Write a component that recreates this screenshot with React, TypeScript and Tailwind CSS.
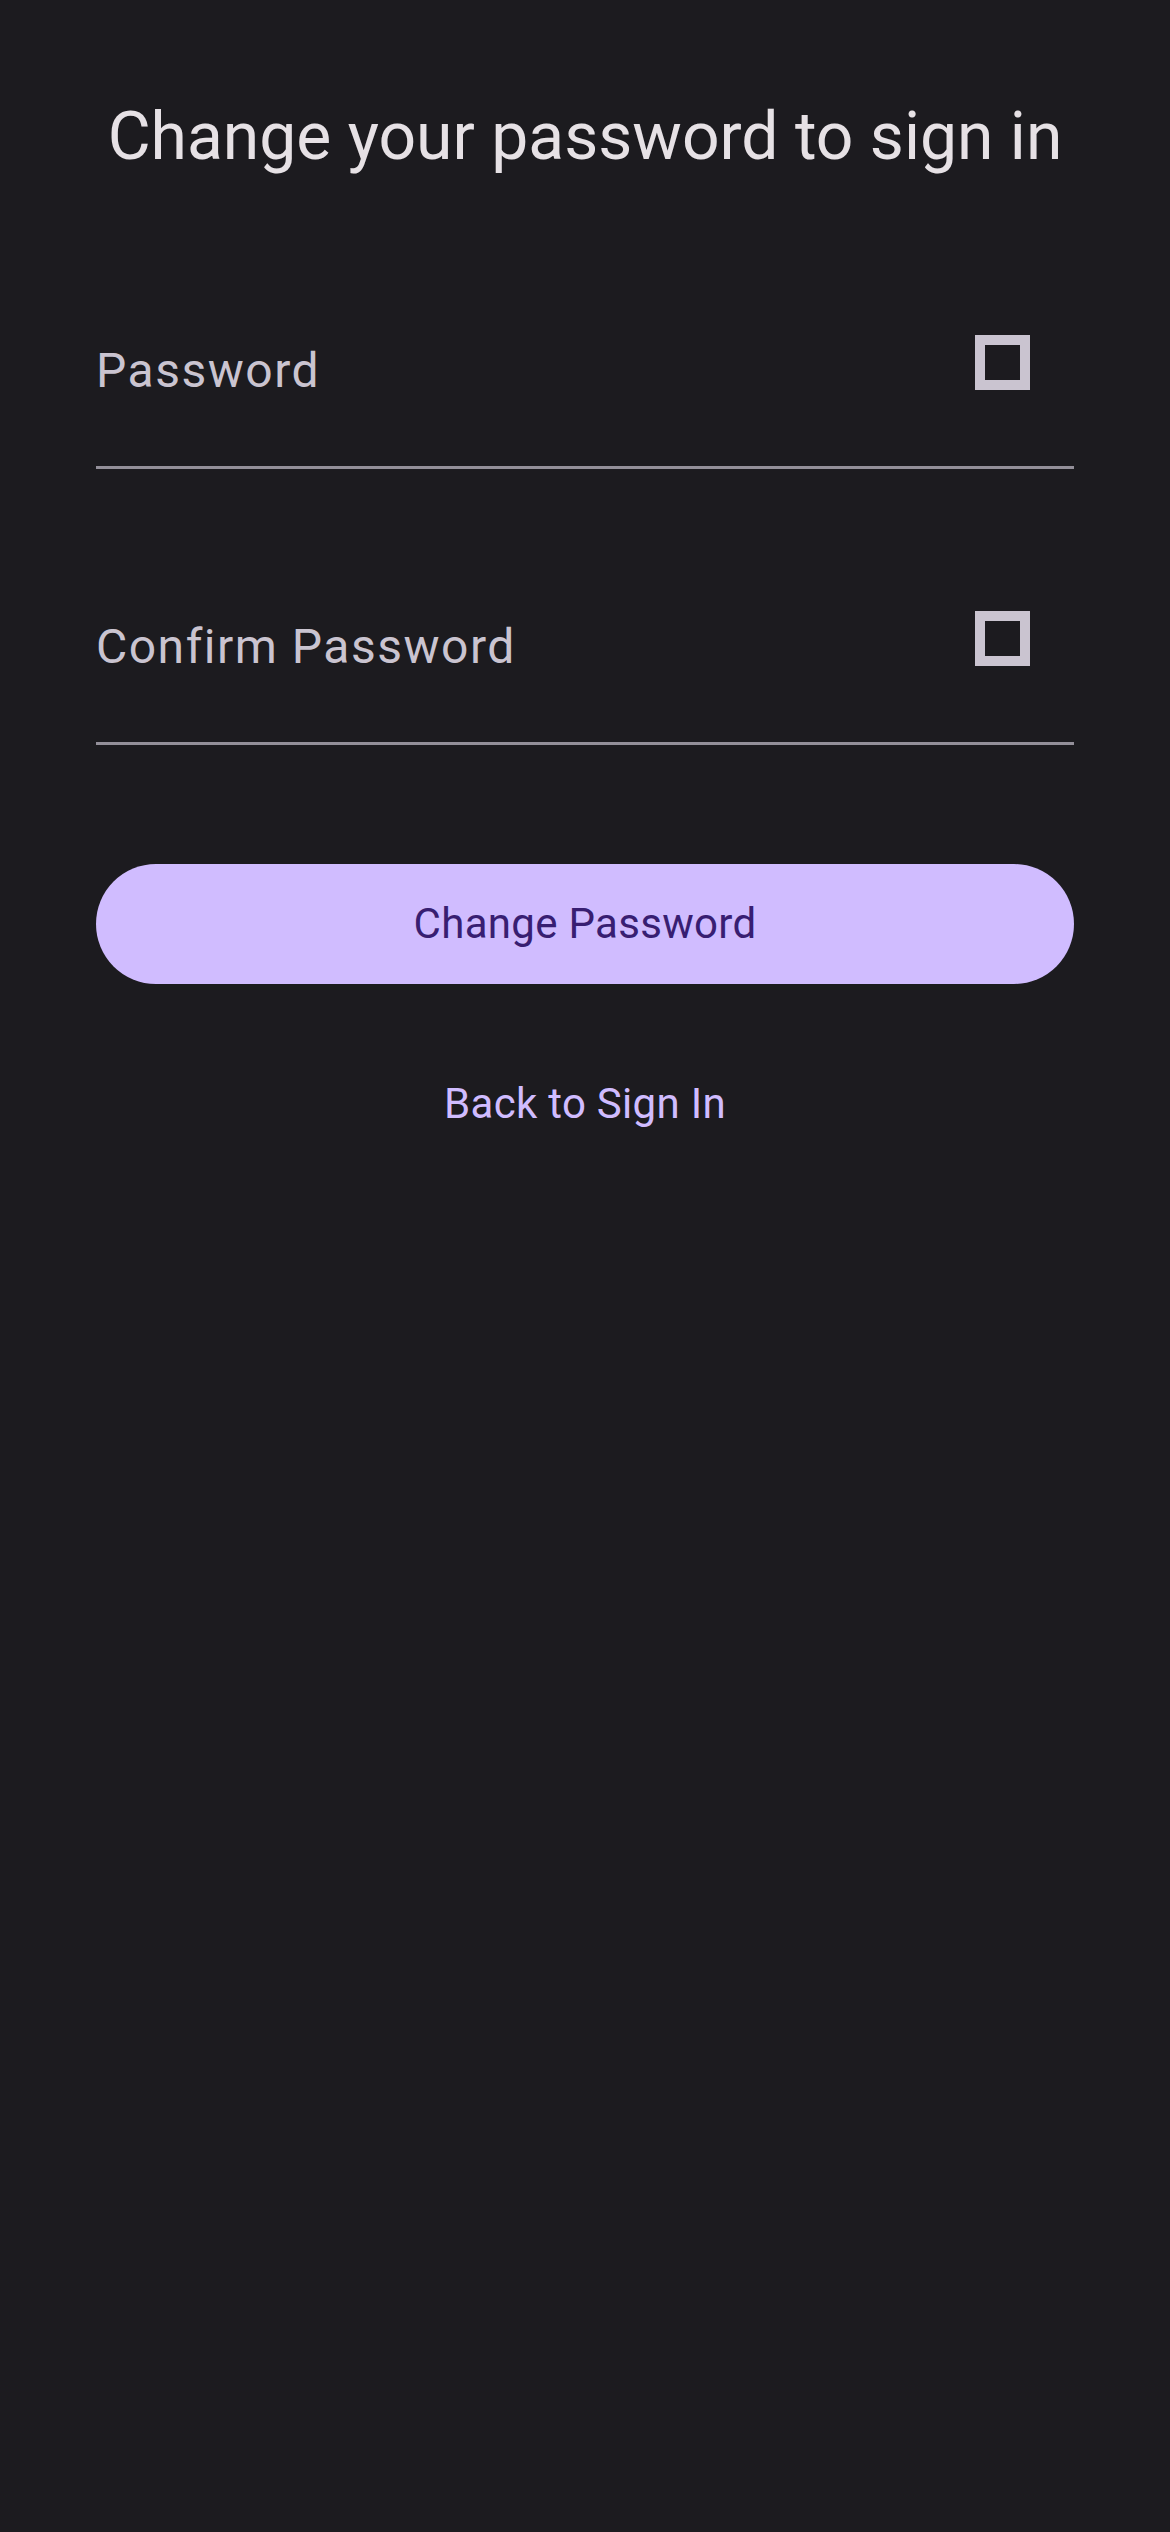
export default function App() {
  const font = { fontFamily: "Roboto, 'Noto Sans', sans-serif" };

  return (
    <main className="min-h-[2532px] w-full bg-[#1c1b1f]" style={font}>
      <div className="px-[96px] pt-[104px]">
        {/* Title */}
        <h1 className="text-center text-[66px] leading-none font-normal text-[#e6e1e5]">
          Change your password to sign in
        </h1>

        {/* Password field */}
        <div className="mt-[165px] border-b-[3px] border-[#938f99] pb-[71px]">
          <div className="flex items-start justify-between">
            <span className="mt-[12px] text-[48px] leading-none tracking-[1.5px] text-[#cac4d0]">
              Password
            </span>
            <span className="mr-[44px] block h-[55px] w-[55px] border-[10px] border-[#cac4d0]" />
          </div>
        </div>

        {/* Confirm password field */}
        <div className="mt-[142px] border-b-[3px] border-[#938f99] pb-[71px]">
          <div className="flex items-start justify-between">
            <span className="mt-[12px] text-[48px] leading-none tracking-[1.5px] text-[#cac4d0]">
              Confirm Password
            </span>
            <span className="mr-[44px] block h-[55px] w-[55px] border-[10px] border-[#cac4d0]" />
          </div>
        </div>

        {/* Submit */}
        <button className="mt-[119px] flex h-[120px] w-full items-center justify-center rounded-full bg-[#d0bcff]">
          <span className="text-[42px] leading-none font-normal tracking-[0.3px] text-[#381e72]">
            Change Password
          </span>
        </button>

        <div className="mt-[99px] flex justify-center">
          <button className="text-[42px] leading-none font-normal tracking-[0.3px] text-[#d0bcff]">
            Back to Sign In
          </button>
        </div>
      </div>
    </main>
  );
}
